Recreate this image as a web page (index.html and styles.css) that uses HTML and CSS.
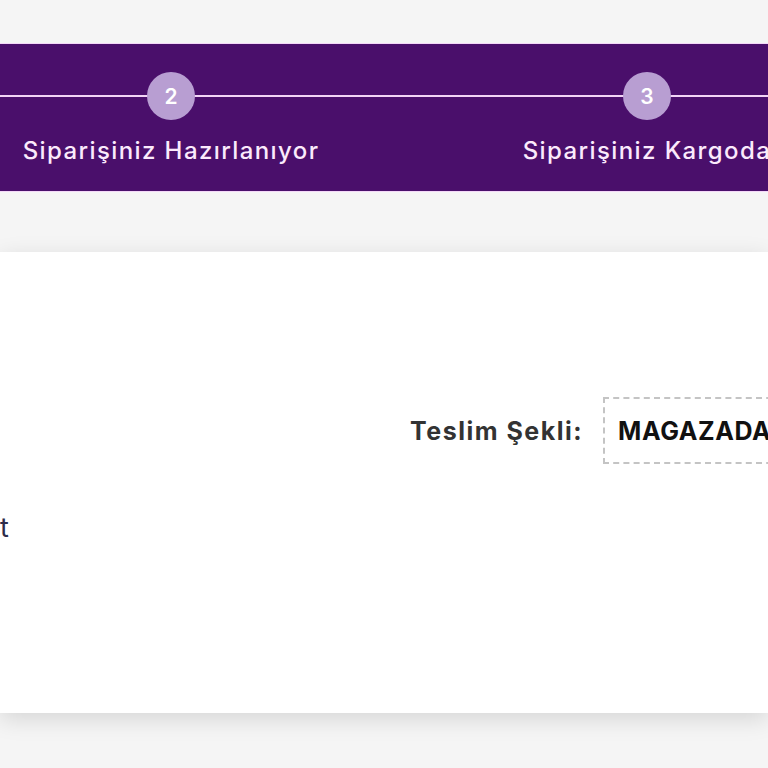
FILE: index.html
```html
<!DOCTYPE html>
<html lang="tr">
<head>
<meta charset="utf-8">
<link rel="stylesheet" href="styles.css">
</head>
<body>
<div class="page">
  <div class="top-space"></div>
  <section class="stepper">
    <div class="track">
      <div class="step">
        <div class="dot-row"><span class="dot">2</span></div>
        <div class="label">Siparişiniz Hazırlanıyor</div>
      </div>
      <div class="step">
        <div class="dot-row"><span class="dot">3</span></div>
        <div class="label">Siparişiniz Kargoda</div>
      </div>
    </div>
  </section>
  <div class="gap"></div>
  <section class="card">
    <div class="delivery">
      <span class="delivery-label">Teslim Şekli:</span>
      <span class="delivery-box">MAGAZADA</span>
    </div>
    <div class="note">t</div>
  </section>
</div>
</body>
</html>
```

FILE: styles.css
```css
html, body {
  margin: 0;
  padding: 0;
}
body {
  background: #f5f5f5;
  font-family: Inter, "Noto Sans", "Liberation Sans", sans-serif;
  overflow: hidden;
  width: 768px;
  height: 768px;
}
.page {
  display: flex;
  flex-direction: column;
}
.top-space {
  height: 43px;
}
.stepper {
  height: 147px;
  background: #4a0f6b;
  border-top: 1px solid #f4d8f8;
  border-bottom: 1px solid #f4d8f8;
  overflow: hidden;
}
.track {
  display: flex;
  margin-left: -67px;
  padding-top: 28px;
}
.step {
  flex: 0 0 476px;
  display: flex;
  flex-direction: column;
  align-items: center;
}
.dot-row {
  position: relative;
  width: 100%;
  height: 48px;
  display: flex;
  justify-content: center;
}
.dot-row::before {
  content: "";
  position: absolute;
  left: 0;
  right: 0;
  top: 23px;
  height: 2px;
  background: #f2d4f6;
}
.dot {
  position: relative;
  width: 48px;
  height: 48px;
  border-radius: 50%;
  background: #b89ed2;
  color: #fff;
  font-weight: 600;
  font-size: 21px;
  display: flex;
  align-items: center;
  justify-content: center;
}
.label {
  margin-top: 16px;
  color: #fbeafc;
  font-size: 24px;
  font-weight: 500;
  white-space: nowrap;
  letter-spacing: 1.4px;
  line-height: 30px;
}
.gap {
  height: 60px;
}
.card {
  height: 461px;
  background: #fff;
  box-shadow: 0 6px 22px rgba(0, 0, 0, 0.13);
  position: relative;
}
.delivery {
  display: flex;
  align-items: center;
  padding-left: 410px;
  margin-top: 145px;
  gap: 20px;
}
.delivery-label {
  font-size: 25px;
  font-weight: 700;
  color: #333;
  letter-spacing: 1.5px;
  white-space: nowrap;
}
.delivery-box {
  height: 63px;
  padding: 0 40px 0 13px;
  border: 2px dashed #c4c4c4;
  display: flex;
  align-items: center;
  font-size: 25px;
  font-weight: 700;
  color: #111;
  letter-spacing: 0.6px;
  white-space: nowrap;
}
.note {
  margin-top: 48px;
  font-size: 27px;
  color: #2c2c4a;
  line-height: 32px;
}
```
